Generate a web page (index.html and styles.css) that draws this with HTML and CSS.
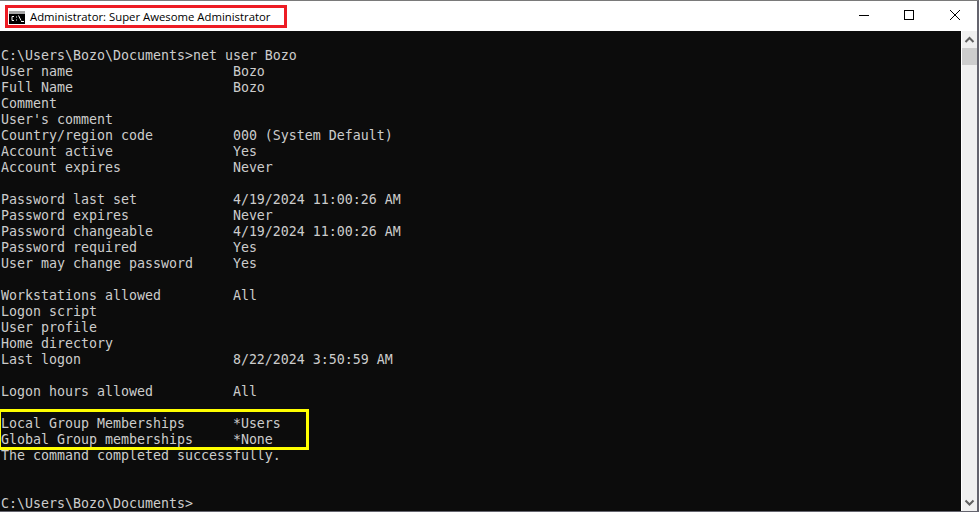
FILE: index.html
```html
<!DOCTYPE html>
<html lang="en">
<head>
<meta charset="utf-8">
<title>Administrator: Super Awesome Administrator</title>
<link rel="stylesheet" href="styles.css">
</head>
<body>
<div class="window">
  <header class="titlebar">
    <div class="title-group">
      <svg class="cmd-icon" width="16" height="13" viewBox="0 0 16 13" aria-hidden="true">
        <rect x="0" y="0" width="16" height="13" fill="#a8a8a8"/>
        <rect x="0" y="3" width="16" height="10" fill="#000"/>
        <path d="M5 5.5H3V9.5H5M7 6H8M7 9H8M9.5 4.5L12 9.5M12 10.5H15" stroke="#f4f4f4" stroke-width="1" fill="none"/>
      </svg>
      <span class="title-text">Administrator: Super Awesome Administrator</span>
    </div>
    <div class="controls">
      <svg class="control" width="46" height="30" viewBox="0 0 46 30" aria-hidden="true"><path d="M20 14.5H30" stroke="#000" fill="none"/></svg>
      <svg class="control" width="46" height="30" viewBox="0 0 46 30" aria-hidden="true"><rect x="19.5" y="9.5" width="9" height="9" stroke="#000" fill="none"/></svg>
      <svg class="control" width="46" height="30" viewBox="0 0 46 30" aria-hidden="true"><path d="M19 9L29 19M29 9L19 19" stroke="#000" fill="none"/></svg>
    </div>
  </header>
  <div class="body">
    <main class="console">
<pre class="output">

C:\Users\Bozo\Documents&gt;net user Bozo
User name                    Bozo
Full Name                    Bozo
Comment
User's comment
Country/region code          000 (System Default)
Account active               Yes
Account expires              Never

Password last set            4/19/2024 11:00:26 AM
Password expires             Never
Password changeable          4/19/2024 11:00:26 AM
Password required            Yes
User may change password     Yes

Workstations allowed         All
Logon script
User profile
Home directory
Last logon                   8/22/2024 3:50:59 AM

Logon hours allowed          All

Local Group Memberships      *Users
Global Group memberships     *None
The command completed successfully.


C:\Users\Bozo\Documents&gt;</pre>
      <div class="highlight"></div>
    </main>
    <aside class="scrollbar">
      <svg class="arrow" width="15" height="17" viewBox="0 0 15 17" aria-hidden="true"><path d="M3.5 11L7.5 7L11.5 11" stroke="#606060" stroke-width="2" fill="none"/></svg>
      <div class="thumb"></div>
      <div class="track"></div>
      <svg class="arrow" width="15" height="17" viewBox="0 0 15 17" aria-hidden="true"><path d="M3.5 6.5L7.5 10.5L11.5 6.5" stroke="#606060" stroke-width="2" fill="none"/></svg>
    </aside>
  </div>
</div>
</body>
</html>
```

FILE: styles.css
```css
html, body {
  margin: 0;
  padding: 0;
  background: #fff;
}
.window {
  width: 979px;
  height: 512px;
  box-sizing: border-box;
  border-top: 1px solid #7a7a7a;
  border-right: 2px solid #64646e;
  border-bottom: 1px solid #64646e;
  display: flex;
  flex-direction: column;
  overflow: hidden;
  background: #fff;
}
.titlebar {
  height: 30px;
  flex: none;
  display: flex;
  align-items: center;
  justify-content: space-between;
  background: #fff;
}
.title-group {
  display: flex;
  align-items: center;
  gap: 5px;
  box-sizing: border-box;
  margin: 1px 0 0 5px;
  padding-left: 1px;
  width: 282px;
  height: 23px;
  border: 3px solid #ed1c24;
}
.cmd-icon { flex: none; margin-top: 2px; }
.title-text {
  font-family: "Open Sans", "Noto Sans", sans-serif;
  font-size: 11.33px;
  color: #000;
  white-space: nowrap;
}
.controls { display: flex; }
.control { display: block; }
.body {
  flex: 1;
  min-height: 0;
  display: flex;
}
.console {
  flex: 1;
  position: relative;
  background: #0c0c0c;
  padding-left: 1px;
  overflow: hidden;
}
.output {
  margin: 0;
  padding-top: 1px;
  font-family: "DejaVu Sans Mono", monospace;
  font-size: 13.29px;
  line-height: 16px;
  color: #cccccc;
}
.highlight {
  position: absolute;
  left: -2px;
  top: 378px;
  width: 311px;
  height: 41px;
  box-sizing: border-box;
  border: 3px solid #ffff00;
}
.scrollbar {
  width: 15px;
  margin-left: 1px;
  flex: none;
  display: flex;
  flex-direction: column;
  background: #f0f0f0;
}
.arrow { display: block; flex: none; }
.thumb { height: 17px; flex: none; background: #cdcdcd; }
.track { flex: 1; }
```
